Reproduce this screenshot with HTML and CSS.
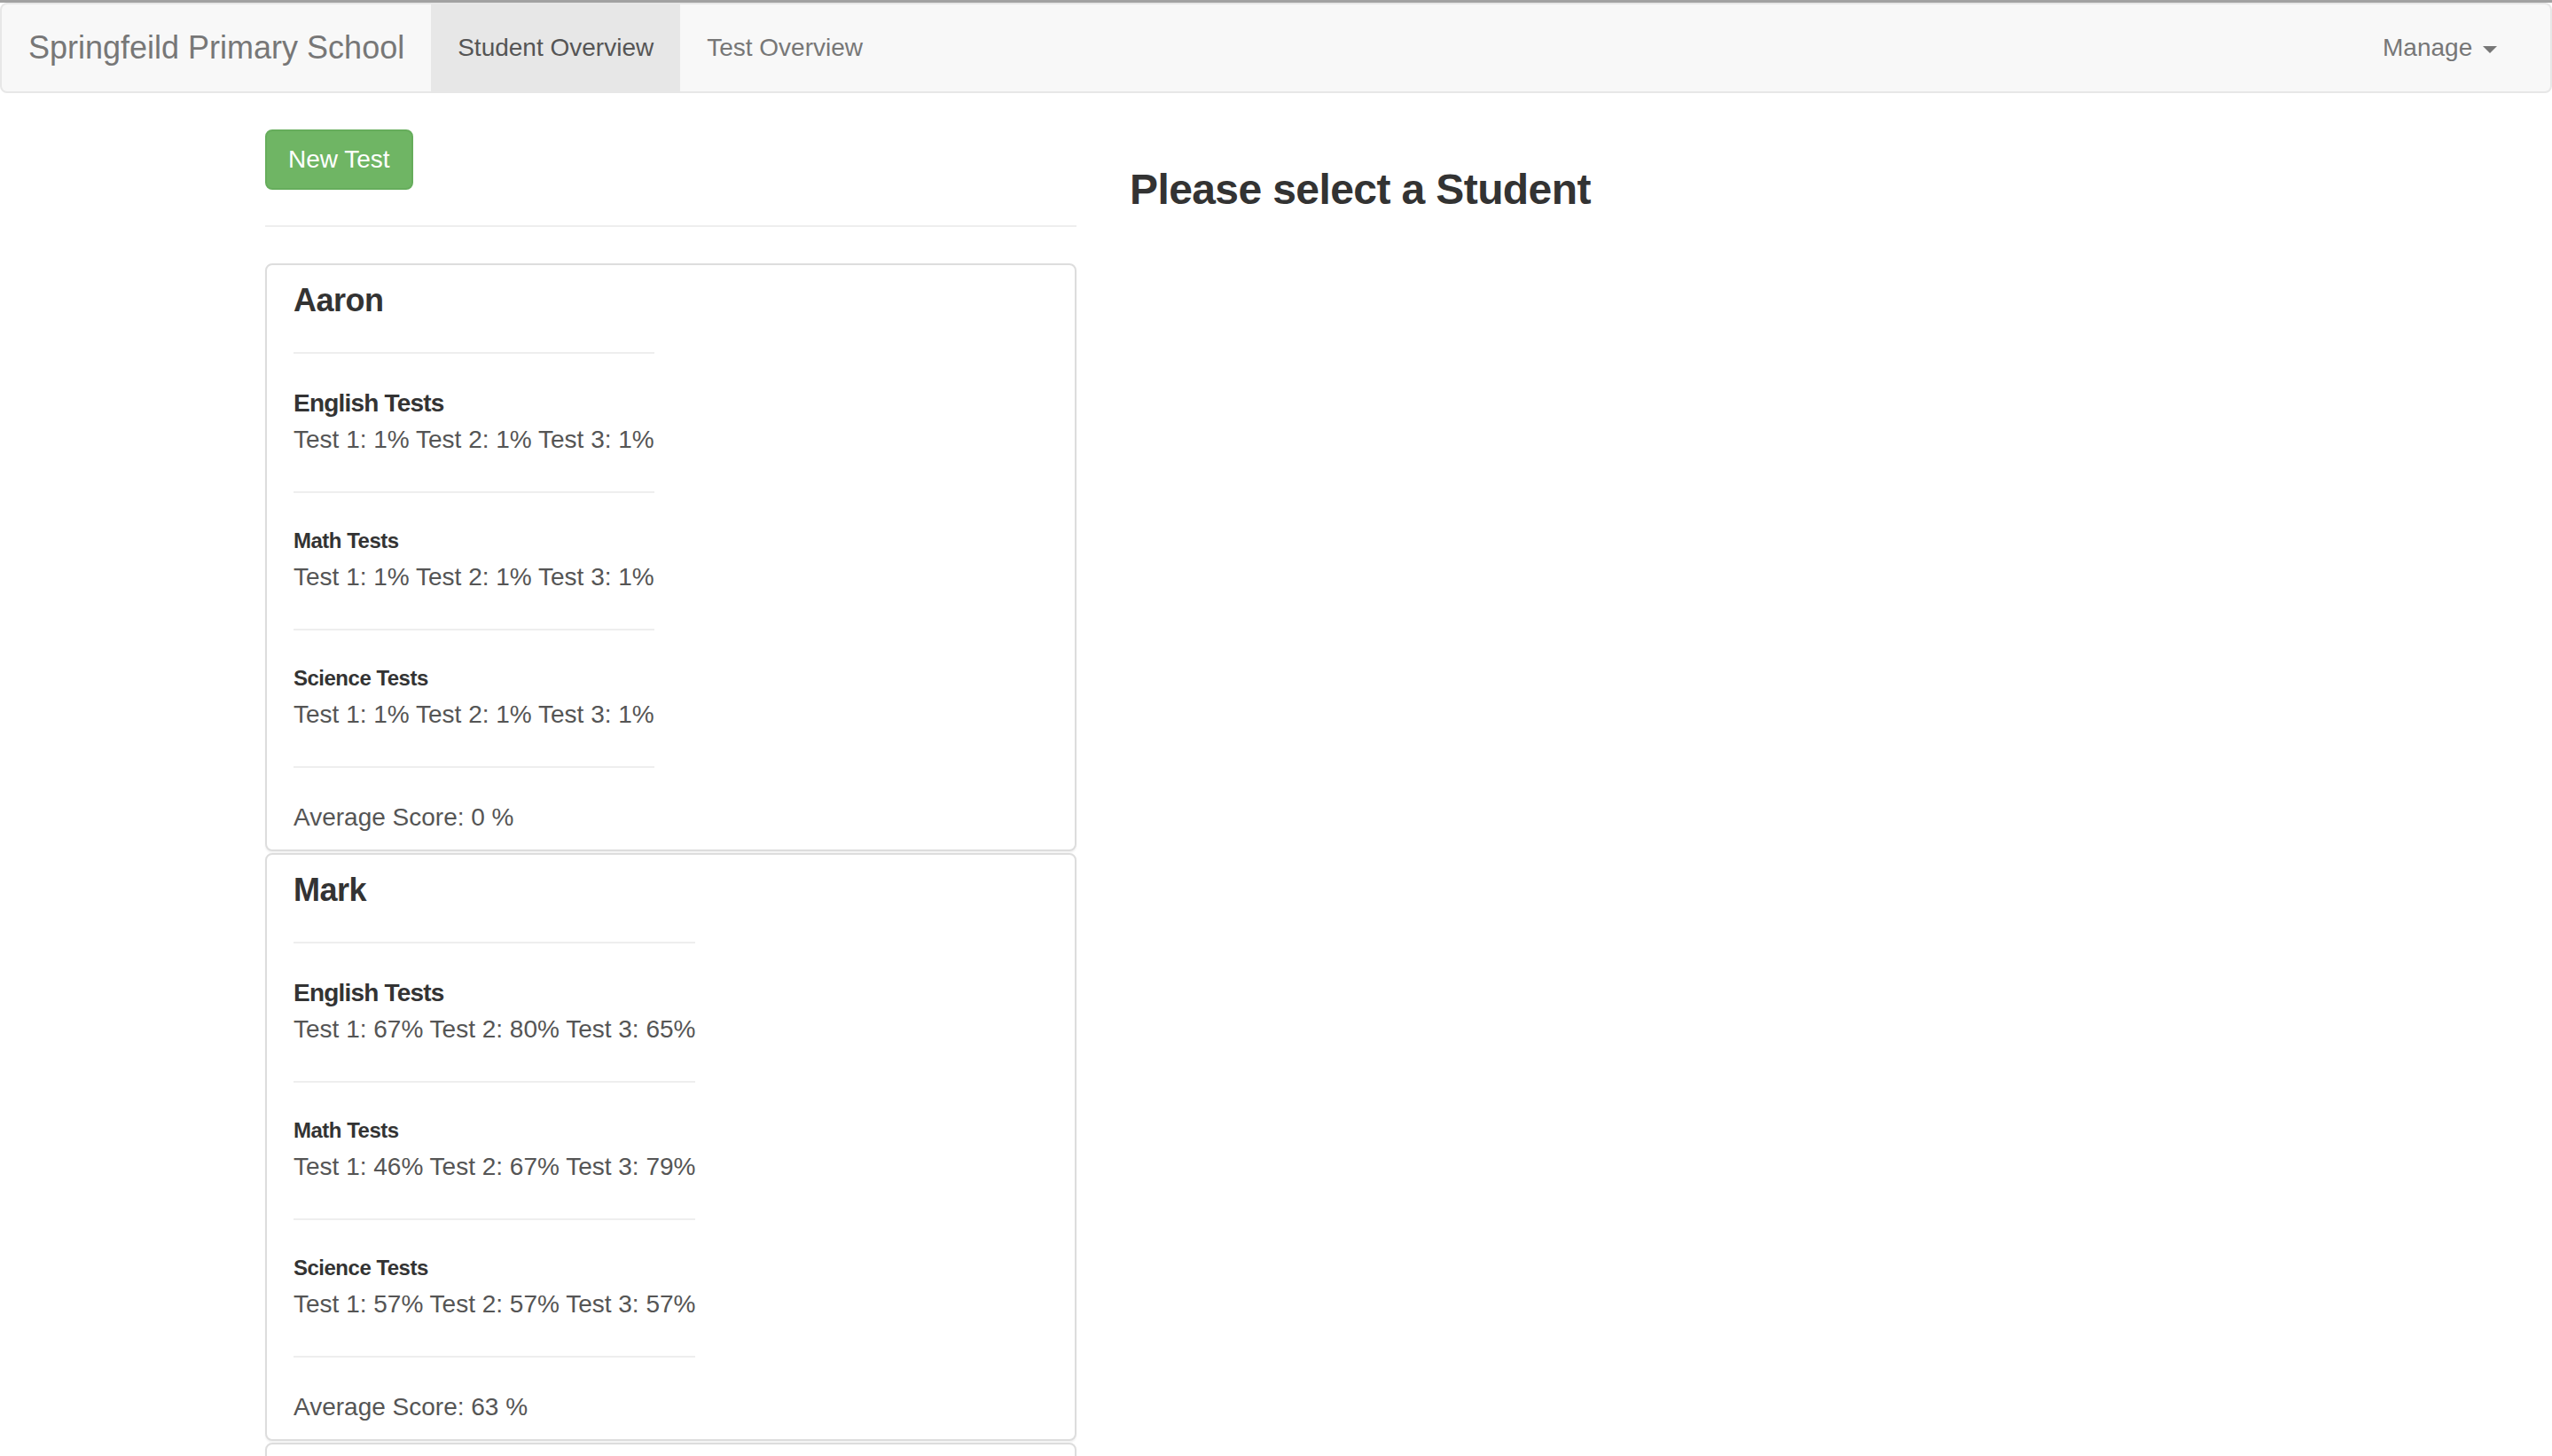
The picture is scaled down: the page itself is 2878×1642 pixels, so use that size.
FILE: index.html
```html
<!DOCTYPE html>
<html lang="en">
<head>
<meta charset="utf-8">
<title>Springfeild Primary School</title>
<link rel="stylesheet" href="styles.css">
</head>
<body>
<div class="topline"></div>
<nav class="navbar">
  <a class="brand" href="#">Springfeild Primary School</a>
  <ul class="nav">
    <li class="active"><a href="#">Student Overview</a></li>
    <li><a href="#">Test Overview</a></li>
  </ul>
  <ul class="nav nav-right">
    <li><a href="#">Manage <span class="caret"></span></a></li>
  </ul>
</nav>

<div class="container">
  <div class="col col-left">
    <a class="btn-success" href="#">New Test</a>
    <hr class="sep">

    <div class="student-card">
      <div class="card-inner">
        <h4 class="name">Aaron</h4>
        <hr class="name-rule">
        <h5 class="subject">English Tests</h5>
        <p class="scores">Test 1: 1% Test 2: 1% Test 3: 1%</p>
        <hr>
        <h6 class="subject small">Math Tests</h6>
        <p class="scores">Test 1: 1% Test 2: 1% Test 3: 1%</p>
        <hr>
        <h6 class="subject small">Science Tests</h6>
        <p class="scores">Test 1: 1% Test 2: 1% Test 3: 1%</p>
        <hr>
        <p class="average">Average Score: 0 %</p>
      </div>
    </div>

    <div class="student-card">
      <div class="card-inner">
        <h4 class="name">Mark</h4>
        <hr class="name-rule">
        <h5 class="subject">English Tests</h5>
        <p class="scores">Test 1: 67% Test 2: 80% Test 3: 65%</p>
        <hr>
        <h6 class="subject small">Math Tests</h6>
        <p class="scores">Test 1: 46% Test 2: 67% Test 3: 79%</p>
        <hr>
        <h6 class="subject small">Science Tests</h6>
        <p class="scores">Test 1: 57% Test 2: 57% Test 3: 57%</p>
        <hr>
        <p class="average">Average Score: 63 %</p>
      </div>
    </div>

    <div class="student-card">
      <div class="card-inner">
        <h4 class="name">Lisa</h4>
        <hr class="name-rule">
        <h5 class="subject">English Tests</h5>
        <p class="scores">Test 1: 72% Test 2: 75% Test 3: 70%</p>
        <hr>
        <p class="average">Average Score: 72 %</p>
      </div>
    </div>
  </div>

  <div class="col col-right">
    <h3 class="prompt">Please select a Student</h3>
  </div>
</div>
</body>
</html>
```

FILE: styles.css
```css
html {
  scrollbar-width: none;
}
html::-webkit-scrollbar {
  display: none;
}
body {
  margin: 0;
  font-family: "Liberation Sans", Arial, Helvetica, sans-serif;
  font-size: 28px;
  line-height: 40px;
  color: #333;
  background: #fff;
}

.topline {
  height: 3px;
  background: #a2a2a2;
}

.navbar {
  display: flex;
  align-items: stretch;
  height: 98px;
  border: 2px solid #e7e7e7;
  border-radius: 8px;
  background: #f8f8f8;
  margin-bottom: 40px;
  padding-right: 30px;
}
.brand {
  padding: 29px 30px;
  font-size: 36px;
  line-height: 40px;
  color: #777;
  text-decoration: none;
}
.nav {
  display: flex;
  list-style: none;
  margin: 0;
  padding: 0;
}
.nav a {
  display: block;
  padding: 29px 30px;
  line-height: 40px;
  color: #777;
  text-decoration: none;
}
.nav .active a {
  background: #e7e7e7;
  color: #555;
}
.nav-right {
  margin-left: auto;
}
.caret {
  display: inline-block;
  width: 0;
  height: 0;
  margin-left: 4px;
  vertical-align: middle;
  border-top: 8px solid;
  border-left: 8px solid transparent;
  border-right: 8px solid transparent;
}

.container {
  width: 2340px;
  margin: 0 auto;
  display: grid;
  grid-template-columns: 5fr 7fr;
}
.col {
  padding: 0 30px;
  min-width: 0;
}

.btn-success {
  display: block;
  width: fit-content;
  margin-top: 1px;
  padding: 12px 24px;
  font-size: 28px;
  line-height: 40px;
  border: 2px solid #66ad5c;
  border-radius: 8px;
  background: #6fb564;
  color: #fff;
  text-decoration: none;
}

.sep {
  border: 0;
  border-top: 2px solid #eee;
  margin: 40px 0 41px;
}

.student-card {
  border: 2px solid #ddd;
  border-radius: 8px;
  padding: 20px 30px 16px;
  margin-bottom: 2px;
  box-shadow: 0 2px 2px rgba(0, 0, 0, 0.05);
  background: #fff;
}
.card-inner {
  width: fit-content;
}
.card-inner hr {
  border: 0;
  border-top: 2px solid #eee;
  margin: 38px 0 33px;
}
.card-inner hr.name-rule {
  margin-bottom: 35px;
}
.name {
  margin: 0;
  font-size: 36px;
  line-height: 40px;
  font-weight: bold;
  letter-spacing: -0.5px;
}
.subject {
  margin: 0;
  font-size: 28px;
  line-height: 42px;
  font-weight: bold;
  letter-spacing: -0.8px;
}
.subject.small {
  font-size: 24px;
  letter-spacing: -0.5px;
}
.scores {
  margin: 0;
  color: #555;
  line-height: 40px;
}
.average {
  margin: 36px 0 0;
  color: #555;
}

.prompt {
  margin: 42px 0 0;
  font-size: 48px;
  line-height: 53px;
  font-weight: bold;
  letter-spacing: -0.6px;
  color: #333;
}
```
